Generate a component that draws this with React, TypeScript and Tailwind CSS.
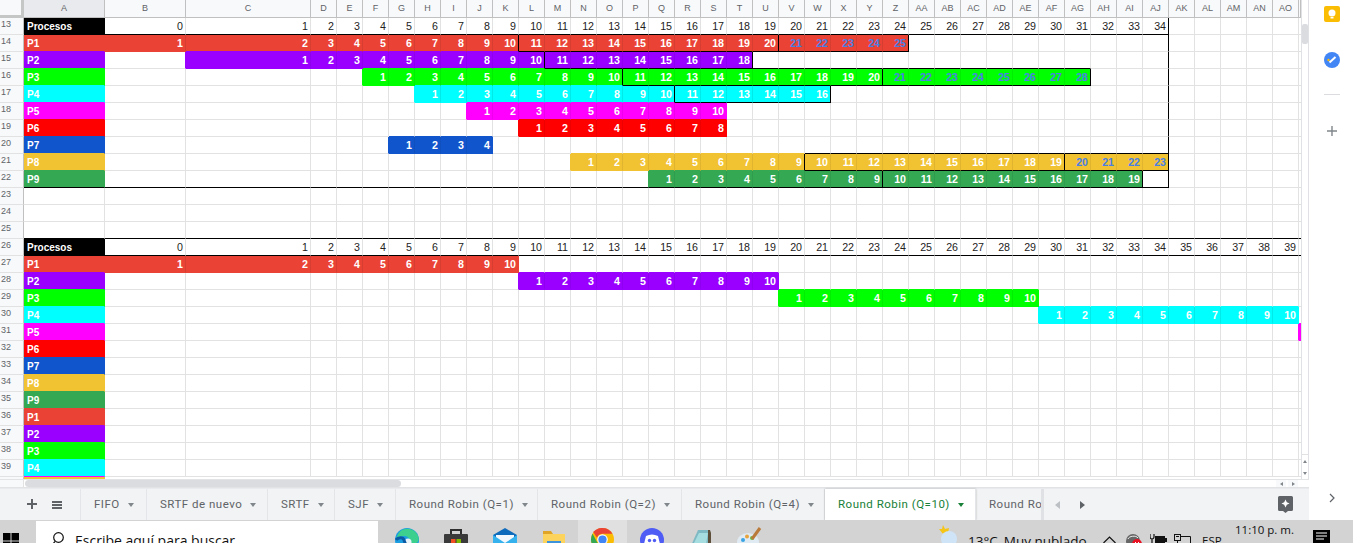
import type { ReactNode } from "react";

type Tone = { bg: string; edgeR: string; edgeB: string; line: string };

const red: Tone = { bg: "bg-[#ea4335]", edgeR: "border-r-[#ea4335]", edgeB: "border-b-[#ea4335]", line: "border-r-[#d63e31]" };
const purple: Tone = { bg: "bg-[#9900ff]", edgeR: "border-r-[#9900ff]", edgeB: "border-b-[#9900ff]", line: "border-r-[#9000f0]" };
const green: Tone = { bg: "bg-[#00ff00]", edgeR: "border-r-[#00ff00]", edgeB: "border-b-[#00ff00]", line: "border-r-[#00ee00]" };
const cyan: Tone = { bg: "bg-[#00ffff]", edgeR: "border-r-[#00ffff]", edgeB: "border-b-[#00ffff]", line: "border-r-[#00eaea]" };
const magenta: Tone = { bg: "bg-[#ff00ff]", edgeR: "border-r-[#ff00ff]", edgeB: "border-b-[#ff00ff]", line: "border-r-[#ee00ee]" };
const pure: Tone = { bg: "bg-[#ff0000]", edgeR: "border-r-[#ff0000]", edgeB: "border-b-[#ff0000]", line: "border-r-[#ee0000]" };
const blue: Tone = { bg: "bg-[#1155cc]", edgeR: "border-r-[#1155cc]", edgeB: "border-b-[#1155cc]", line: "border-r-[#104fbe]" };
const gold: Tone = { bg: "bg-[#f1c232]", edgeR: "border-r-[#f1c232]", edgeB: "border-b-[#f1c232]", line: "border-r-[#e0b42e]" };
const forest: Tone = { bg: "bg-[#34a853]", edgeR: "border-r-[#34a853]", edgeB: "border-b-[#34a853]", line: "border-r-[#309c4d]" };
const ink: Tone = { bg: "bg-black", edgeR: "border-r-black", edgeB: "border-b-black", line: "border-r-black" };

const tones = [red, purple, green, cyan, magenta, pure, blue, gold, forest];

// start = column of value 1, blueFrom = first value drawn in the link blue
type Bar = { row: number; start: number; len: number; tone: Tone; blueFrom?: number };

const bars: Bar[] = [
  { row: 14, start: 1, len: 25, tone: red, blueFrom: 21 },
  { row: 15, start: 2, len: 18, tone: purple },
  { row: 16, start: 5, len: 28, tone: green, blueFrom: 21 },
  { row: 17, start: 7, len: 16, tone: cyan },
  { row: 18, start: 9, len: 10, tone: magenta },
  { row: 19, start: 11, len: 8, tone: pure },
  { row: 20, start: 6, len: 4, tone: blue },
  { row: 21, start: 13, len: 23, tone: gold, blueFrom: 20 },
  { row: 22, start: 16, len: 19, tone: forest },
  { row: 27, start: 1, len: 10, tone: red },
  { row: 28, start: 11, len: 10, tone: purple },
  { row: 29, start: 21, len: 10, tone: green },
  { row: 30, start: 31, len: 10, tone: cyan },
  { row: 31, start: 41, len: 1, tone: magenta },
];

// black boxes: row, first column, last column (one row high)
const boxes: [number, number, number][] = [
  [14, 11, 20], [14, 21, 25], [15, 12, 19], [16, 15, 24], [16, 25, 32], [17, 17, 22],
  [21, 22, 31], [21, 32, 35], [22, 25, 34], [22, 35, 35],
];

const blackRight = new Set<string>();
const blackBottom = new Set<string>();
boxes.forEach(([r, a, b]) => {
  blackRight.add(`${r}:${a - 1}`);
  blackRight.add(`${r}:${b}`);
  for (let c = a; c <= b; c++) {
    blackBottom.add(`${r - 1}:${c}`);
    blackBottom.add(`${r}:${c}`);
  }
});
for (let r = 13; r <= 22; r++) blackRight.add(`${r}:35`);
for (let c = 0; c <= 35; c++) {
  blackBottom.add(`13:${c}`);
  blackBottom.add(`22:${c}`);
}
for (let c = 0; c <= 41; c++) {
  blackBottom.add(`25:${c}`);
  blackBottom.add(`26:${c}`);
}

const LAST = 41;

function colName(c: number) {
  return c < 26 ? String.fromCharCode(65 + c) : "A" + String.fromCharCode(65 + c - 26);
}

function colWidth(c: number) {
  if (c === 0 || c === 1) return "w-[81px]";
  if (c === 2) return "w-[125px]";
  if (c === LAST) return "w-[2px]";
  return "w-[26px]";
}

function labelTone(row: number): Tone | null {
  if (row === 13 || row === 26) return ink;
  if (row >= 14 && row <= 22) return tones[row - 14];
  if (row >= 27 && row <= 35) return tones[row - 27];
  if (row >= 36 && row <= 40) return tones[row - 36];
  return null;
}

function toneAt(row: number, c: number): Tone | null {
  if (c === 0) return labelTone(row);
  const bar = bars.find((b) => b.row === row && c >= b.start && c < b.start + b.len);
  return bar ? bar.tone : null;
}

function cellText(row: number, c: number): { text: string; link: boolean } {
  if (c === 0) {
    if (row === 13 || row === 26) return { text: "Procesos", link: false };
    const n = row <= 22 ? row - 13 : row <= 35 ? row - 26 : row - 35;
    return { text: row >= 14 && labelTone(row) ? `P${n}` : "", link: false };
  }
  if ((row === 13 && c <= 35) || (row === 26 && c <= 40)) return { text: String(c - 1), link: false };
  const bar = bars.find((b) => b.row === row && c >= b.start && c < b.start + b.len);
  if (!bar || c === LAST) return { text: "", link: false };
  const v = c - bar.start + 1;
  return { text: String(v), link: !!bar.blueFrom && v >= bar.blueFrom };
}

function Cell({ row, c }: { row: number; c: number }) {
  const tone = toneAt(row, c);
  const next = c < LAST ? toneAt(row, c + 1) : null;
  const below = toneAt(row + 1, c);
  const { text, link } = cellText(row, c);

  let right = "border-r-[#e2e2e2]";
  if (blackRight.has(`${row}:${c}`)) right = "border-r-black";
  else if (tone && next && c > 0) right = tone.line;
  else if (tone) right = tone.edgeR;
  else if (next) right = next.edgeR;

  let bottom = "border-b-[#e2e2e2]";
  if (blackBottom.has(`${row}:${c}`)) bottom = "border-b-black";
  else if (below) bottom = below.edgeB;
  else if (tone) bottom = tone.edgeB;

  const isHead = row === 13 || row === 26;
  const weight = c === 0 || !isHead ? "font-bold" : "font-normal";
  const colour = link ? "text-[#4a7fe4]" : c === 0 || !isHead ? "text-white" : "text-[#222222]";
  const align = c === 0 ? "text-left pl-[3px] text-[10px] leading-[17px]" : "text-right pr-[2px] text-[10.67px] leading-[16px]";

  return (
    <div
      className={`${colWidth(c)} shrink-0 h-full border-r border-b overflow-hidden whitespace-nowrap ${right} ${bottom} ${tone ? tone.bg : "bg-white"} ${weight} ${colour} ${align}`}
    >
      {text}
    </div>
  );
}

const columns = Array.from({ length: LAST + 1 }, (_, i) => i);
const rowNumbers = Array.from({ length: 27 }, (_, i) => 13 + i);

function Grid() {
  return (
    <div className="h-[479px] overflow-hidden font-['Liberation_Sans',sans-serif]">
      <div className="flex h-[18px]">
        <div className="w-[24px] shrink-0 h-full bg-[#f8f9fa] border-r-[3px] border-b-[3px] border-[#c4c7c5]" />
        {columns.map((c) => (
          <div
            key={c}
            className={`${colWidth(c)} ${c === 0 ? "bg-[#e8eaed]" : "bg-[#f8f9fa]"} shrink-0 h-full border-r border-b border-[#c0c0c0] overflow-hidden text-center text-[9px] leading-[17px] text-[#5f6368]`}
          >
            {c < LAST ? colName(c) : ""}
          </div>
        ))}
      </div>
      {rowNumbers.map((row) => (
        <div key={row} className="flex h-[17px]">
          <div className="w-[24px] shrink-0 h-full bg-[#f8f9fa] border-r border-b border-r-[#c0c0c0] border-b-[#e2e2e2] pl-[1px] text-[9px] leading-[13px] text-[#5f6368]">
            {row}
          </div>
          {columns.map((c) => (
            <Cell key={c} row={row} c={c} />
          ))}
        </div>
      ))}
      <div className="flex h-[2px] overflow-hidden">
        <div className="w-[24px] shrink-0 h-full bg-[#f8f9fa] border-r border-[#c0c0c0]" />
        <div className="w-[81px] shrink-0 h-full bg-[#f1c232]" />
      </div>
    </div>
  );
}

function VerticalScroll() {
  return (
    <div className="w-[8px] h-[479px] shrink-0 border-x border-[#dfe1e5] bg-white flex flex-col">
      <div className="h-[20px] mt-[24px] bg-[#dadce0] rounded-[2px]" />
      <div className="mt-auto h-[25px] border-t border-[#e2e2e2] flex flex-col items-center justify-around">
        <span className="block border-x-[2px] border-b-[3px] border-transparent border-b-[#80868b]" />
        <span className="block border-x-[2px] border-t-[3px] border-transparent border-t-[#80868b]" />
      </div>
    </div>
  );
}

function HorizontalScroll() {
  return (
    <div className="flex h-[9px] border-t border-b border-[#e2e3e5] bg-white">
      <div className="w-[24px] shrink-0 bg-[#f8f9fa] border-r border-[#e2e2e2]" />
      <div className="w-[376px] ml-[1px] h-[7px] rounded-[4px] bg-[#dadce0]" />
      <div className="ml-auto mr-[11px] flex">
        <div className="w-[10px] h-full flex items-center justify-center bg-[#f8f9fa]">
          <span className="block border-y-[2px] border-r-[3px] border-transparent border-r-[#80868b]" />
        </div>
        <div className="w-[10px] h-full ml-[2px] flex items-center justify-center bg-[#f8f9fa]">
          <span className="block border-y-[2px] border-l-[3px] border-transparent border-l-[#80868b]" />
        </div>
      </div>
    </div>
  );
}

function Caret({ active }: { active?: boolean }) {
  return (
    <span
      className={`block ml-[8px] border-x-[3.5px] border-t-[4px] border-transparent ${active ? "border-t-[#188038]" : "border-t-[#80868b]"}`}
    />
  );
}

function SheetTab({ label, width, active }: { label: string; width: string; active?: boolean }) {
  return (
    <div
      className={`${width} ${active ? "bg-white text-[#188038] shadow-[0_0_2px_rgba(0,0,0,0.25)]" : "text-[#5f6368]"} shrink-0 h-full flex items-center pl-[13px] border-r border-[#e3e5e8] whitespace-nowrap`}
    >
      {label}
      <Caret active={active} />
    </div>
  );
}

function TabBar() {
  return (
    <div className="h-[32px] flex bg-[#f1f3f4] border-t border-[#e8eaed] text-[11.5px] font-normal tracking-[0.5px] font-['Roboto',sans-serif]">
      <div className="w-[81px] shrink-0 flex items-center border-r border-[#e3e5e8] pl-[27px]">
        <svg width="10" height="10" viewBox="0 0 10 10" className="mb-[1px]">
          <path d="M4 0h2v4h4v2H6v4H4V6H0V4h4z" fill="#5f6368" />
        </svg>
        <div className="ml-[15px] w-[10px] flex flex-col gap-[1px]">
          <span className="block h-[2px] bg-[#5f6368]" />
          <span className="block h-[2px] bg-[#5f6368]" />
          <span className="block h-[2px] bg-[#5f6368]" />
        </div>
      </div>
      <SheetTab label="FIFO" width="w-[66px]" />
      <SheetTab label="SRTF de nuevo" width="w-[121px]" />
      <SheetTab label="SRTF" width="w-[67px]" />
      <SheetTab label="SJF" width="w-[61px]" />
      <SheetTab label="Round Robin (Q=1)" width="w-[142px]" />
      <SheetTab label="Round Robin (Q=2)" width="w-[144px]" />
      <SheetTab label="Round Robin (Q=4)" width="w-[143px]" />
      <SheetTab label="Round Robin (Q=10)" width="w-[151px]" active />
      <div className="w-[68px] shrink-0 h-full overflow-hidden flex items-center pl-[13px] text-[#5f6368] whitespace-nowrap border-r-[3px] border-[#dfe1e5]">
        Round Robin (Q=20)
      </div>
      <div className="flex items-center ml-[11px] gap-[20px]">
        <span className="block border-y-[4px] border-r-[5px] border-transparent border-r-[#bdc1c6]" />
        <span className="block border-y-[4px] border-l-[5px] border-transparent border-l-[#5f6368]" />
      </div>
      <div className="ml-auto mr-[16px] flex items-center">
        <svg width="15" height="17" viewBox="0 0 15 17">
          <path d="M1.500 0h12A1.500 1.500 0 0 1 15 1.500v12a1.500 1.500 0 0 1-1.500 1.500h-3.500L7.500 17 5 15H1.500A1.500 1.500 0 0 1 0 13.500v-12A1.500 1.500 0 0 1 1.500 0z" fill="#5f6368" />
          <path d="M7.500 3.500l1.300 2.700 2.700 1.300-2.700 1.300-1.300 2.700-1.300-2.700-2.700-1.300 2.700-1.300z" fill="#fff" />
        </svg>
      </div>
    </div>
  );
}

function SidePanel() {
  return (
    <div className="w-[44px] shrink-0 h-[520px] bg-white flex flex-col items-center pl-[1px]">
      <svg width="16" height="16" viewBox="0 0 16 16" className="mt-[6px]">
        <rect width="16" height="16" rx="2" fill="#fbbc04" />
        <circle cx="8" cy="7" r="3.500" fill="#fff" />
        <rect x="6.500" y="11" width="3" height="1.500" fill="#fff" />
      </svg>
      <svg width="16" height="16" viewBox="0 0 16 16" className="mt-[30px]">
        <circle cx="8" cy="8" r="8" fill="#4285f4" />
        <path d="M5.500 10.500L11.500 5" stroke="#fff" strokeWidth="2" fill="none" />
        <circle cx="4.500" cy="8" r="1.200" fill="#fbbc04" />
      </svg>
      <div className="w-[16px] h-px bg-[#dadce0] mt-[26px]" />
      <svg width="10" height="10" viewBox="0 0 10 10" className="mt-[31px]">
        <path d="M4.300 0h1.400v4.300H10v1.400H5.700V10H4.300V5.700H0V4.300h4.300z" fill="#80868b" />
      </svg>
      <svg width="8" height="10" viewBox="0 0 8 10" className="mt-auto mb-[17px]">
        <path d="M2 1l4 4-4 4" stroke="#5f6368" strokeWidth="1.200" fill="none" />
      </svg>
    </div>
  );
}

function Slot({ children, active }: { children: ReactNode; active?: boolean }) {
  return (
    <div className={`w-[49px] shrink-0 h-[23px] overflow-hidden flex justify-center pt-[8px] ${active ? "bg-[#e0e0e0]" : ""}`}>{children}</div>
  );
}

function AppIcons() {
  return (
    <>
      <Slot>
        <svg width="24" height="24" viewBox="0 0 24 24" className="shrink-0">
          <circle cx="12" cy="12" r="12" fill="#1b9de2" />
          <path d="M7 2C13 -1 21 1 23.500 9c.8 3-.5 6-3.500 6.500-3 .5-5-.5-5-2.500 0-3-3-5-6-5-3 0-6 1-8 4C2 7 4 3.500 7 2z" fill="#3ccf8e" />
          <circle cx="13" cy="14" r="3.500" fill="#e8f4fa" />
          <path d="M1 12c2-3 7-3 8 0 1 3 2 7 6 8" stroke="#0c59a4" strokeWidth="3" fill="none" />
        </svg>
      </Slot>
      <Slot>
        <svg width="24" height="24" viewBox="0 0 24 24" className="shrink-0">
          <path d="M7 7V2h10v5" stroke="#2e2e2e" strokeWidth="2" fill="none" />
          <rect y="6" width="24" height="18" rx="1" fill="#3a3a3a" />
          <rect x="7" y="11" width="4.500" height="4.500" fill="#f25022" />
          <rect x="12.500" y="11" width="4.500" height="4.500" fill="#7fba00" />
        </svg>
      </Slot>
      <Slot>
        <svg width="24" height="24" viewBox="0 0 24 24" className="shrink-0">
          <path d="M12 0l12 7v17H0V7z" fill="#0f6cbd" />
          <path d="M3 7h18v8l-9 4-9-4z" fill="#f4f9fd" />
          <path d="M0 7l12 8 12-8v17H0z" fill="#35b1ee" />
        </svg>
      </Slot>
      <Slot>
        <svg width="22" height="21" viewBox="0 0 22 21" className="mt-[3px] shrink-0">
          <path d="M0 0h8l2 3h12v18H0z" fill="#e0a526" />
          <rect y="3" width="22" height="18" fill="#fcd35c" />
          <rect x="4" y="10" width="14" height="4" fill="#3d94dd" />
        </svg>
      </Slot>
      <Slot active>
        <svg width="23" height="23" viewBox="0 0 24 24" className="shrink-0">
          <circle cx="12" cy="12" r="12" fill="#fbbc04" />
          <path d="M12 0a12 12 0 0 1 10.400 6H12a6 6 0 0 0-5.700 4.200L2.300 4.300A12 12 0 0 1 12 0z" fill="#ea4335" />
          <path d="M1.600 6a12 12 0 0 0 9 17.900l4-6.900a6 6 0 0 1-8-2z" fill="#34a853" />
          <circle cx="12" cy="12" r="5.500" fill="#fff" />
          <circle cx="12" cy="12" r="4.300" fill="#4285f4" />
        </svg>
      </Slot>
      <Slot>
        <svg width="24" height="24" viewBox="0 0 24 24" className="shrink-0">
          <circle cx="12" cy="12" r="12" fill="#4f5df5" />
          <path d="M6 8c4-2 8-2 12 0l2 8c-2 1.500-4 2-5 2l-1-2H10l-1 2c-1 0-3-.5-5-2z" fill="#fff" />
          <circle cx="9.500" cy="12.500" r="1.700" fill="#4f5df5" />
          <circle cx="14.500" cy="12.500" r="1.700" fill="#4f5df5" />
        </svg>
      </Slot>
      <Slot>
        <svg width="22" height="22" viewBox="0 0 22 22" className="mt-[2px] shrink-0">
          <path d="M8 0h12l-3 18H0z" fill="#7fb9c4" />
          <path d="M9 3h9l-2.500 14H2z" fill="#a5dde0" />
          <path d="M18 0h2l1 3v16h-3z" fill="#5d4f3a" />
        </svg>
      </Slot>
      <Slot>
        <svg width="25" height="24" viewBox="0 0 25 24" className="-mt-[1px] shrink-0">
          <ellipse cx="11" cy="15" rx="11" ry="9" fill="#dfeaf2" />
          <circle cx="6" cy="13" r="2" fill="#3aa3e3" />
          <circle cx="10" cy="9.500" r="2" fill="#e8a33d" />
          <circle cx="15" cy="11" r="2" fill="#6dbb45" />
          <circle cx="6" cy="18" r="2" fill="#d9483b" />
          <path d="M15 12L23 1" stroke="#b97a3a" strokeWidth="3" />
        </svg>
      </Slot>
    </>
  );
}

function TrayIcons() {
  return (
    <>
      <svg width="13" height="8" viewBox="0 0 13 8" className="ml-[16px] mt-[16px] shrink-0">
        <path d="M0.500 7L6.500 1l6 6" stroke="#111" strokeWidth="1.200" fill="none" />
      </svg>
      <svg width="16" height="16" viewBox="0 0 16 16" className="ml-[10px] mt-[13px] shrink-0">
        <circle cx="7" cy="8" r="7" fill="#666" />
        <path d="M2 6c1-3 8-4 10-1" stroke="#eee" fill="none" />
        <circle cx="11" cy="11" r="5" fill="#e81123" />
        <path d="M9 9l4 4M13 9l-4 4" stroke="#fff" />
      </svg>
      <svg width="17" height="15" viewBox="0 0 17 15" className="ml-[8px] mt-[14px] shrink-0">
        <path d="M0 0v3a2 2 0 0 0 4 0V0M2 5v4" stroke="#111" strokeWidth="1.200" fill="none" />
        <rect x="5" y="2" width="10" height="9" fill="#111" />
        <rect x="15" y="4" width="2" height="4" fill="#111" />
      </svg>
      <svg width="17" height="15" viewBox="0 0 17 15" className="ml-[7px] mt-[14px] shrink-0">
        <rect x="0.500" y="0.500" width="6" height="6" fill="none" stroke="#111" />
        <path d="M2 2.500h3M7 2.500h9.500v12.500M3.500 7v8" stroke="#111" fill="none" />
      </svg>
    </>
  );
}

function Taskbar() {
  return (
    <div className="h-[23px] flex bg-[#d3d3d3] overflow-hidden font-['Open_Sans',sans-serif] text-[#111]">
      <div className="w-[36px] shrink-0 pl-[3px] pt-[13px]">
        <svg width="16" height="16" viewBox="0 0 16 16">
          <path d="M0 0h7.500v7.500H0zM8.500 0H16v7.500H8.500zM0 8.500h7.500V16H0zM8.500 8.500H16V16H8.500z" fill="#000" />
        </svg>
      </div>
      <div className="w-[342px] shrink-0 mt-[1px] h-[30px] bg-white flex items-start pl-[16px] pt-[11px]">
        <svg width="13" height="13" viewBox="0 0 13 13" className="shrink-0">
          <circle cx="6.500" cy="5.500" r="4.800" fill="none" stroke="#111" strokeWidth="1.200" />
          <path d="M3 9.500L0.500 12.500" stroke="#111" strokeWidth="1.200" />
        </svg>
        <span className="ml-[10px] text-[14px] leading-[20px] -mt-[1px] whitespace-nowrap">Escribe aquí para buscar</span>
      </div>
      <div className="w-[4px] shrink-0" />
      <AppIcons />
      <div className="w-[162px] shrink-0" />
      <svg width="23" height="22" viewBox="0 0 23 22" className="shrink-0 mt-[5px]">
        <path d="M7 0l2 4 4-1-1 5-5 1-4-5 3 0z" fill="#f5c518" />
        <circle cx="13" cy="14" r="8" fill="#cfe4f7" />
      </svg>
      <div className="ml-[9px] w-[119px] shrink-0 text-[13.5px] leading-[20px] pt-[11px] whitespace-nowrap">
        13°C<span className="ml-[6px]">Muy nublado</span>
      </div>
      <TrayIcons />
      <span className="ml-[11px] w-[33px] shrink-0 text-[11.5px] leading-[16px] pt-[13px]">ESP</span>
      <span className="w-[78px] shrink-0 text-[11.5px] leading-[16px] pt-[2px] whitespace-nowrap">11:10 p. m.</span>
      <svg width="17" height="17" viewBox="0 0 17 17" className="mt-[10px] shrink-0">
        <path d="M0 0h17v14H8l-3 3v-3H0z" fill="#000" />
        <path d="M3 3h11M3 6h11M3 9h8" stroke="#fff" />
      </svg>
    </div>
  );
}

export default function App() {
  return (
    <div className="w-[1353px] h-[543px] overflow-hidden bg-white flex flex-col">
      <div className="flex h-[520px]">
        <div className="w-[1309px] shrink-0 flex flex-col">
          <div className="flex">
            <div className="w-[1301px] shrink-0">
              <Grid />
            </div>
            <VerticalScroll />
          </div>
          <HorizontalScroll />
          <TabBar />
        </div>
        <SidePanel />
      </div>
      <Taskbar />
    </div>
  );
}
